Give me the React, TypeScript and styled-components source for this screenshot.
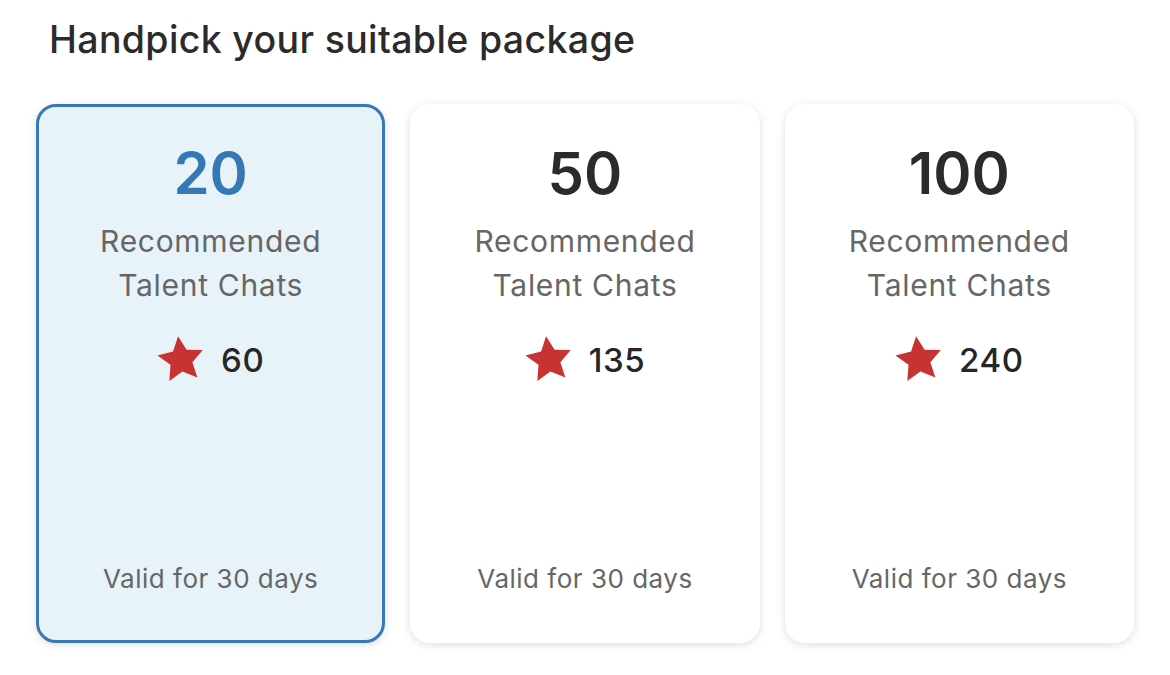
import React from "react";
import styled, { createGlobalStyle } from "styled-components";

const GlobalStyle = createGlobalStyle`
  body {
    margin: 0;
    background: #ffffff;
    font-family: Inter, "Noto Sans", "Liberation Sans", sans-serif;
  }
`;

const Page = styled.div`
  width: 1170px;
  height: 675px;
  padding: 0 36px;
  box-sizing: border-box;
  background: #fff;
`;

const Title = styled.h1`
  margin: 0;
  padding: 18px 0 0 13px;
  font-size: 37.5px;
  line-height: 44px;
  font-weight: 500;
  color: #2b2b2b;
  letter-spacing: 0.35px;
`;

const CardGrid = styled.div`
  display: grid;
  grid-template-columns: repeat(3, 1fr);
  gap: 25px;
  margin-top: 42px;
`;

const Card = styled.div<{ $selected?: boolean }>`
  display: flex;
  flex-direction: column;
  align-items: center;
  height: 539px;
  box-sizing: border-box;
  padding: 31px 16px 46px;
  border-radius: 20px;
  border: 3px solid ${(p) => (p.$selected ? "#3679b4" : "transparent")};
  background: ${(p) => (p.$selected ? "#e8f2f9" : "#ffffff")};
  box-shadow: 0 2px 9px rgba(0, 0, 0, 0.13);
`;

const Count = styled.div<{ $selected?: boolean }>`
  font-size: 58px;
  line-height: 70px;
  font-weight: 600;
  color: ${(p) => (p.$selected ? "#3479b5" : "#2b2b2b")};
`;

const Label = styled.div`
  margin-top: 11px;
  font-size: 30px;
  line-height: 44px;
  font-weight: 400;
  letter-spacing: 0.7px;
  color: #666666;
  text-align: center;
`;

const PointsRow = styled.div`
  display: flex;
  align-items: center;
  gap: 16px;
  margin-top: 29px;
  height: 48px;
`;

const Points = styled.span`
  font-size: 33px;
  font-weight: 500;
  letter-spacing: 0.6px;
  color: #262626;
`;

const Validity = styled.div`
  margin-top: auto;
  font-size: 26px;
  line-height: 31px;
  letter-spacing: 0.5px;
  color: #666666;
`;

const Star = () => (
  <svg width="48" height="50" viewBox="-25 -26 50 52" aria-hidden="true">
    <polygon
      transform="rotate(-7)"
      fill="#c73333"
      points="0,-25 7.1,-9.8 23.8,-7.7 11.5,3.7 14.7,20.2 0,12 -14.7,20.2 -11.5,3.7 -23.8,-7.7 -7.1,-9.8"
    />
  </svg>
);

const packages = [
  { count: 20, points: 60, selected: true },
  { count: 50, points: 135 },
  { count: 100, points: 240 },
];

export default function App() {
  return (
    <>
      <GlobalStyle />
      <Page>
        <Title>Handpick your suitable package</Title>
        <CardGrid>
          {packages.map((pkg) => (
            <Card key={pkg.count} $selected={pkg.selected}>
              <Count $selected={pkg.selected}>{pkg.count}</Count>
              <Label>
                Recommended
                <br />
                Talent Chats
              </Label>
              <PointsRow>
                <Star />
                <Points>{pkg.points}</Points>
              </PointsRow>
              <Validity>Valid for 30 days</Validity>
            </Card>
          ))}
        </CardGrid>
      </Page>
    </>
  );
}
